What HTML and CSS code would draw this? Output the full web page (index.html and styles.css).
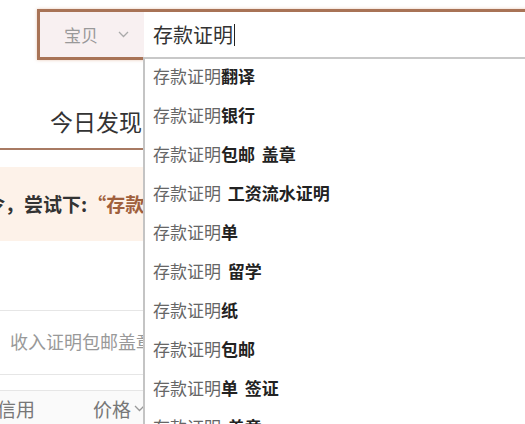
FILE: index.html
```html
<!DOCTYPE html>
<html lang="zh">
<head>
  <meta charset="UTF-8">
  <title>搜索 - 存款证明</title>
  <link rel="stylesheet" href="styles.css">
</head>
<body>
  <div class="search">
    <div class="scope">
      宝贝
      <svg class="chev" width="11" height="7" viewBox="0 0 11 7"><path d="M1 1l4.5 4.5L10 1" fill="none" stroke="#aaa" stroke-width="1.3"/></svg>
    </div>
    <div class="query">存款证明<span class="caret"></span></div>
  </div>

  <ul class="suggest">
    <li>存款证明<b>翻译</b></li>
    <li>存款证明<b>银行</b></li>
    <li>存款证明<b>包邮 盖章</b></li>
    <li>存款证明 <b>工资流水证明</b></li>
    <li>存款证明<b>单</b></li>
    <li>存款证明 <b>留学</b></li>
    <li>存款证明<b>纸</b></li>
    <li>存款证明<b>包邮</b></li>
    <li>存款证明<b>单 签证</b></li>
    <li>存款证明 <b>盖章</b></li>
  </ul>

  <h2 class="today">今日发现</h2>

  <div class="tip">口令，尝试下:<em>“存款证明”</em></div>

  <div class="item">收入证明包邮盖章</div>

  <div class="sort">
    <span class="credit">信用</span>
    <span class="price">价格
      <svg width="11" height="7" viewBox="0 0 11 7"><path d="M1 1l4.5 4.5L10 1" fill="none" stroke="#999" stroke-width="1.3"/></svg>
    </span>
  </div>
</body>
</html>
```

FILE: styles.css
```css
body {
  margin: 0;
  width: 525px;
  height: 424px;
  overflow: hidden;
  position: relative;
  background: #fff;
  font-family: "Noto Sans CJK SC", "Noto Sans", sans-serif;
  color: #333;
}
.search {
  display: flex;
  height: 45px;
  margin: 9px -40px 0 37px;
  border: 3px solid #a87356;
  box-shadow: 0 0 3px rgba(210, 150, 110, 0.5);
}
.scope {
  width: 80px;
  padding-left: 24px;
  display: flex;
  align-items: center;
  gap: 20px;
  background: #f8f0f1;
  color: #999;
  font-size: 17px;
}
.query {
  flex: 1;
  display: flex;
  align-items: center;
  padding-left: 9px;
  background: #fff;
  font-size: 20px;
  color: #333;
}
.caret {
  display: inline-block;
  width: 1px;
  height: 22px;
  margin-left: 1px;
  background: #222;
}
.suggest {
  position: absolute;
  left: 143px;
  top: 57px;
  width: 420px;
  margin: 0;
  padding: 0;
  list-style: none;
  background: #fff;
  border-top: 2px solid #c8c8c8;
  border-left: 2px solid #c4c4c4;
  z-index: 2;
}
.suggest li {
  height: 34px;
  line-height: 34px;
  padding: 0 0 5px 8px;
  font-size: 17px;
  color: #666;
  white-space: pre;
  word-spacing: 3px;
}
.suggest b {
  color: #222;
  font-weight: 700;
}
.today {
  margin: 46px 0 0;
  padding: 0 0 12px 50px;
  height: 30px;
  line-height: 30px;
  font-size: 23px;
  font-weight: 400;
  color: #333;
  border-bottom: 2px solid #a87a63;
}
.tip {
  margin-top: 17px;
  height: 74px;
  line-height: 74px;
  background: #fdf2e9;
  font-size: 19px;
  font-weight: 700;
  color: #333;
  white-space: nowrap;
  text-indent: -33px;
}
.tip em {
  font-style: normal;
  color: #a0603c;
}
.item {
  margin-top: 69px;
  height: 63px;
  line-height: 60px;
  padding-left: 10px;
  border-top: 1px solid #e6e6e6;
  border-bottom: 1px solid #e6e6e6;
  font-size: 18px;
  color: #999;
}
.sort {
  margin-top: 15px;
  height: 35px;
  display: flex;
  align-items: center;
  border-top: 1px solid #e6e6e6;
  background: #fafafa;
  font-size: 19px;
  color: #777;
}
.credit {
  margin-left: -3px;
}
.price {
  margin-left: 58px;
  display: flex;
  align-items: center;
  gap: 3px;
}
```
